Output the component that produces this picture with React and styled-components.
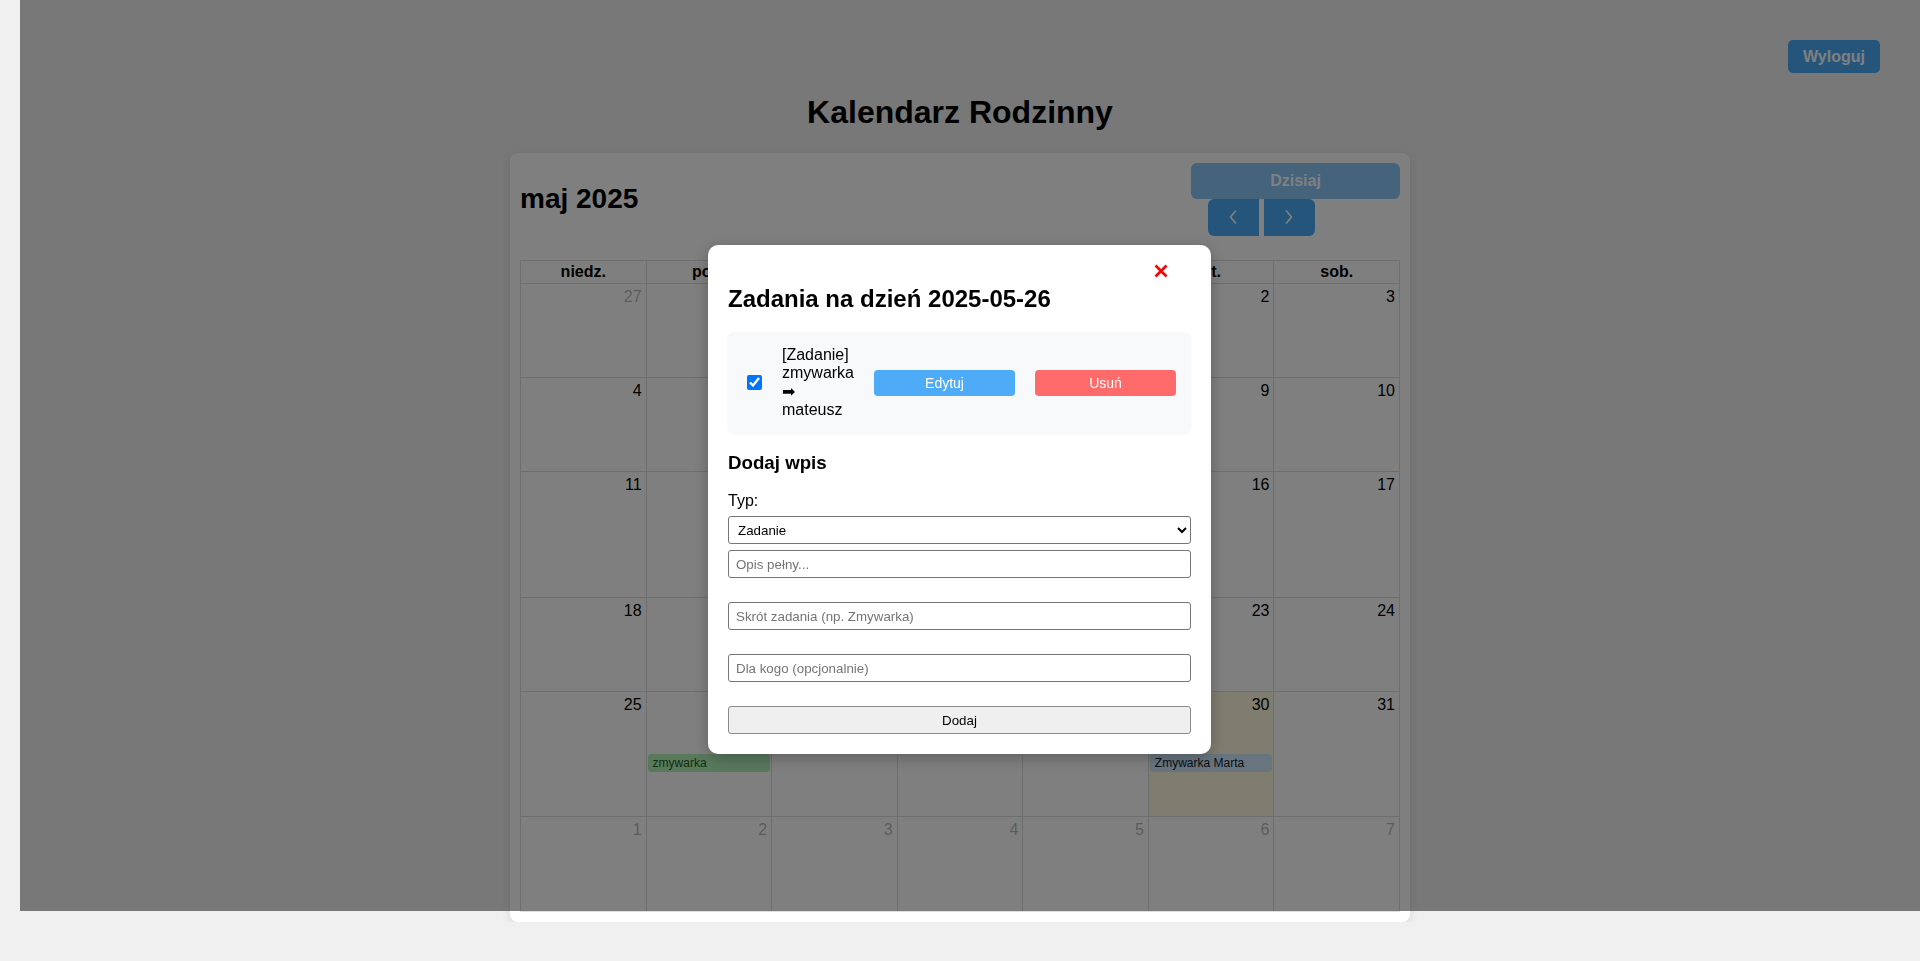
import React from 'react';
import styled, { createGlobalStyle } from 'styled-components';

const FONT = `"Liberation Sans", Arial, "DejaVu Sans", sans-serif`;

const GlobalStyle = createGlobalStyle`
  html, body { margin: 0; padding: 0; background: #f0f0f0; }
  body { font-family: ${FONT}; color: #000; }
  *, *::before, *::after { box-sizing: border-box; }
`;

const Page = styled.div`
  padding: 40px 40px 0;
`;

const TopBar = styled.div`
  display: flex;
  justify-content: flex-end;
`;

const LogoutButton = styled.button`
  width: 92px;
  height: 33px;
  padding: 0 15px;
  border: none;
  border-radius: 5px;
  background: #4dabf7;
  color: #fff;
  font: bold 16px ${FONT};
`;

const PageTitle = styled.h1`
  margin: 21.44px 0;
  text-align: center;
  font-size: 32px;
  line-height: 36.8px;
  font-weight: bold;
`;

const CalendarCard = styled.div`
  max-width: 900px;
  margin: 0 auto;
  padding: 10px;
  background: #fff;
  border-radius: 8px;
  box-shadow: 0 2px 10px rgba(0, 0, 0, 0.1);
`;

const Toolbar = styled.div`
  display: flex;
  justify-content: space-between;
  align-items: center;
  margin-bottom: 24px;
`;

const MonthTitle = styled.h2`
  margin: 0;
  font-size: 28px;
  line-height: 32px;
  font-weight: bold;
`;

const NavChunk = styled.div`
  width: 209px;
  display: flex;
  flex-direction: column;
  align-items: flex-start;
`;

const TodayButton = styled.button`
  width: 100%;
  height: 36px;
  border: none;
  border-radius: 6px;
  background: #4dabf7;
  opacity: 0.65;
  color: #fff;
  font: bold 16px ${FONT};
`;

const NavGroup = styled.div`
  display: flex;
  gap: 5px;
  margin-left: 17px;
`;

const NavButton = styled.button`
  width: 51px;
  height: 37px;
  padding: 0;
  border: none;
  border-radius: ${(p) => (p.$side === 'left' ? '6px 0 0 6px' : '0 6px 6px 0')};
  background: #4dabf7;
  display: flex;
  align-items: center;
  justify-content: center;
`;

const MonthGrid = styled.div`
  display: grid;
  grid-template-columns: repeat(7, 1fr);
  border-top: 1px solid #ddd;
  border-left: 1px solid #ddd;
`;

const HeadCell = styled.div`
  padding: 2px 4px;
  border-right: 1px solid #ddd;
  border-bottom: 1px solid #ddd;
  text-align: center;
  font-size: 16px;
  line-height: 18.4px;
  font-weight: bold;
`;

const DayCell = styled.div`
  height: ${(p) => p.$h}px;
  border-right: 1px solid #ddd;
  border-bottom: 1px solid #ddd;
  background: ${(p) => (p.$today ? 'rgba(255, 220, 40, 0.15)' : 'transparent')};
  overflow: hidden;
`;

const DayNumber = styled.div`
  padding: 4px;
  text-align: right;
  font-size: 16px;
  line-height: 18.4px;
  color: ${(p) => (p.$other ? 'rgba(0, 0, 0, 0.3)' : '#000')};
`;

const EventList = styled.div`
  margin-top: 36px;
`;

const EventChip = styled.div`
  margin: 0 1px;
  height: 18px;
  padding: 0 5px;
  border-radius: 3px;
  font-size: 12px;
  line-height: 18px;
  white-space: nowrap;
  overflow: hidden;
  background: ${(p) => p.$bg};
  color: ${(p) => p.$fg};
`;

const Overlay = styled.div`
  position: fixed;
  top: 0;
  left: 20px;
  right: 0;
  bottom: 50px;
  background: rgba(0, 0, 0, 0.5);
  z-index: 10;
`;

const Modal = styled.div`
  position: fixed;
  top: 245px;
  left: calc(50% - 252px);
  width: 503px;
  padding: 20px;
  background: #fff;
  border-radius: 10px;
  box-shadow: 0 4px 16px rgba(0, 0, 0, 0.25);
  z-index: 11;
`;

const CloseButton = styled.button`
  position: absolute;
  top: 19px;
  right: 43px;
  width: 14px;
  height: 14px;
  padding: 0;
  border: none;
  background: transparent;
  display: flex;
`;

const ModalTitle = styled.h2`
  margin: 19.92px 0;
  font-size: 24px;
  line-height: 27.6px;
  font-weight: bold;
`;

const TaskItem = styled.div`
  display: flex;
  align-items: center;
  gap: 20px;
  padding: 13.5px 15px;
  background: #f8f9fa;
  border-radius: 6px;
  box-shadow: 0 1px 3px rgba(0, 0, 0, 0.04);
`;

const TaskCheck = styled.input`
  width: 15px;
  height: 15px;
  margin: 0 0 0 4px;
  flex: none;
`;

const TaskText = styled.span`
  width: min-content;
  flex: none;
  font-size: 16px;
  line-height: 18.4px;
`;

const ActionButton = styled.button`
  flex: 1;
  height: 26px;
  border: none;
  border-radius: 4px;
  background: ${(p) => p.$bg};
  color: #fff;
  font: 14px ${FONT};
`;

const SectionTitle = styled.h3`
  margin: 18.72px 0;
  font-size: 18.72px;
  line-height: 21.5px;
  font-weight: bold;
`;

const FieldLabel = styled.label`
  display: block;
  margin-bottom: 6px;
  font-size: 16px;
  line-height: 18.4px;
`;

const TypeSelect = styled.select`
  display: block;
  width: 100%;
  height: 28px;
  margin: 0 0 6px;
  padding: 0 5px;
  border: 1px solid #767676;
  border-radius: 3px;
  background: #fff;
  color: #000;
  font: 13.333px ${FONT};
`;

const TextField = styled.input`
  display: block;
  width: 100%;
  height: 28px;
  margin: 0 0 24px;
  padding: 0 7px;
  border: 1px solid #767676;
  border-radius: 3px;
  background: #fff;
  font: 13.333px ${FONT};
  &::placeholder { color: #757575; }
`;

const SubmitButton = styled.button`
  display: block;
  width: 100%;
  height: 28px;
  border: 1px solid #8a8a8a;
  border-radius: 3px;
  background: #efefef;
  color: #000;
  font: 13.333px ${FONT};
`;

const DAY_NAMES = ['niedz.', 'pon.', 'wt.', 'śr.', 'czw.', 'pt.', 'sob.'];
const ROW_HEIGHTS = [94, 94, 126, 94, 125, 95];

const buildWeeks = () => {
  const weeks = [];
  weeks.push([
    { d: 27, o: true }, { d: 28, o: true }, { d: 29, o: true }, { d: 30, o: true },
    { d: 1 }, { d: 2 }, { d: 3 },
  ]);
  let n = 4;
  for (let w = 0; w < 4; w++) {
    const row = [];
    for (let i = 0; i < 7; i++) row.push({ d: n++ });
    weeks.push(row);
  }
  weeks.push([1, 2, 3, 4, 5, 6, 7].map((d) => ({ d, o: true })));
  return weeks;
};

const EVENTS = {
  '4-1': { title: 'zmywarka', bg: '#b2f2bb', fg: '#1b5e20' },
  '4-5': { title: 'Zmywarka Marta', bg: '#d0ebff', fg: '#0b1d33' },
};

const Chevron = ({ dir }) => (
  <svg width="8" height="14" viewBox="0 0 8 14" fill="none">
    <polyline
      points={dir === 'left' ? '6.5,1 1.5,7 6.5,13' : '1.5,1 6.5,7 1.5,13'}
      stroke="#fff"
      strokeWidth="1.6"
      strokeLinecap="round"
      strokeLinejoin="round"
    />
  </svg>
);

export default function App() {
  const weeks = buildWeeks();
  return (
    <>
      <GlobalStyle />
      <Page>
        <TopBar>
          <LogoutButton>Wyloguj</LogoutButton>
        </TopBar>
        <PageTitle>Kalendarz Rodzinny</PageTitle>
        <CalendarCard>
          <Toolbar>
            <MonthTitle>maj 2025</MonthTitle>
            <div />
            <NavChunk>
              <TodayButton disabled>Dzisiaj</TodayButton>
              <NavGroup>
                <NavButton $side="left" aria-label="prev"><Chevron dir="left" /></NavButton>
                <NavButton $side="right" aria-label="next"><Chevron dir="right" /></NavButton>
              </NavGroup>
            </NavChunk>
          </Toolbar>
          <MonthGrid>
            {DAY_NAMES.map((n) => (
              <HeadCell key={n}>{n}</HeadCell>
            ))}
            {weeks.map((week, wi) =>
              week.map((day, di) => {
                const ev = EVENTS[`${wi}-${di}`];
                return (
                  <DayCell key={`${wi}-${di}`} $h={ROW_HEIGHTS[wi]} $today={wi === 4 && di === 5}>
                    <DayNumber $other={day.o}>{day.d}</DayNumber>
                    {ev && (
                      <EventList>
                        <EventChip $bg={ev.bg} $fg={ev.fg}>{ev.title}</EventChip>
                      </EventList>
                    )}
                  </DayCell>
                );
              })
            )}
          </MonthGrid>
        </CalendarCard>
      </Page>
      <Overlay />
      <Modal>
        <CloseButton aria-label="Zamknij">
          <svg width="14" height="14" viewBox="0 0 14 14">
            <path d="M1.5 1.5 L12.5 12.5 M12.5 1.5 L1.5 12.5" stroke="#ff0000" strokeWidth="2.6" />
          </svg>
        </CloseButton>
        <ModalTitle>Zadania na dzień 2025-05-26</ModalTitle>
        <TaskItem>
          <TaskCheck type="checkbox" defaultChecked />
          <TaskText>[Zadanie] zmywarka ➡ mateusz</TaskText>
          <ActionButton $bg="#4dabf7">Edytuj</ActionButton>
          <ActionButton $bg="#ff6b6b">Usuń</ActionButton>
        </TaskItem>
        <SectionTitle>Dodaj wpis</SectionTitle>
        <FieldLabel>Typ:</FieldLabel>
        <TypeSelect defaultValue="Zadanie">
          <option value="Zadanie">Zadanie</option>
          <option value="Wydarzenie">Wydarzenie</option>
        </TypeSelect>
        <TextField placeholder="Opis pełny..." />
        <TextField placeholder="Skrót zadania (np. Zmywarka)" />
        <TextField placeholder="Dla kogo (opcjonalnie)" />
        <SubmitButton>Dodaj</SubmitButton>
      </Modal>
    </>
  );
}
